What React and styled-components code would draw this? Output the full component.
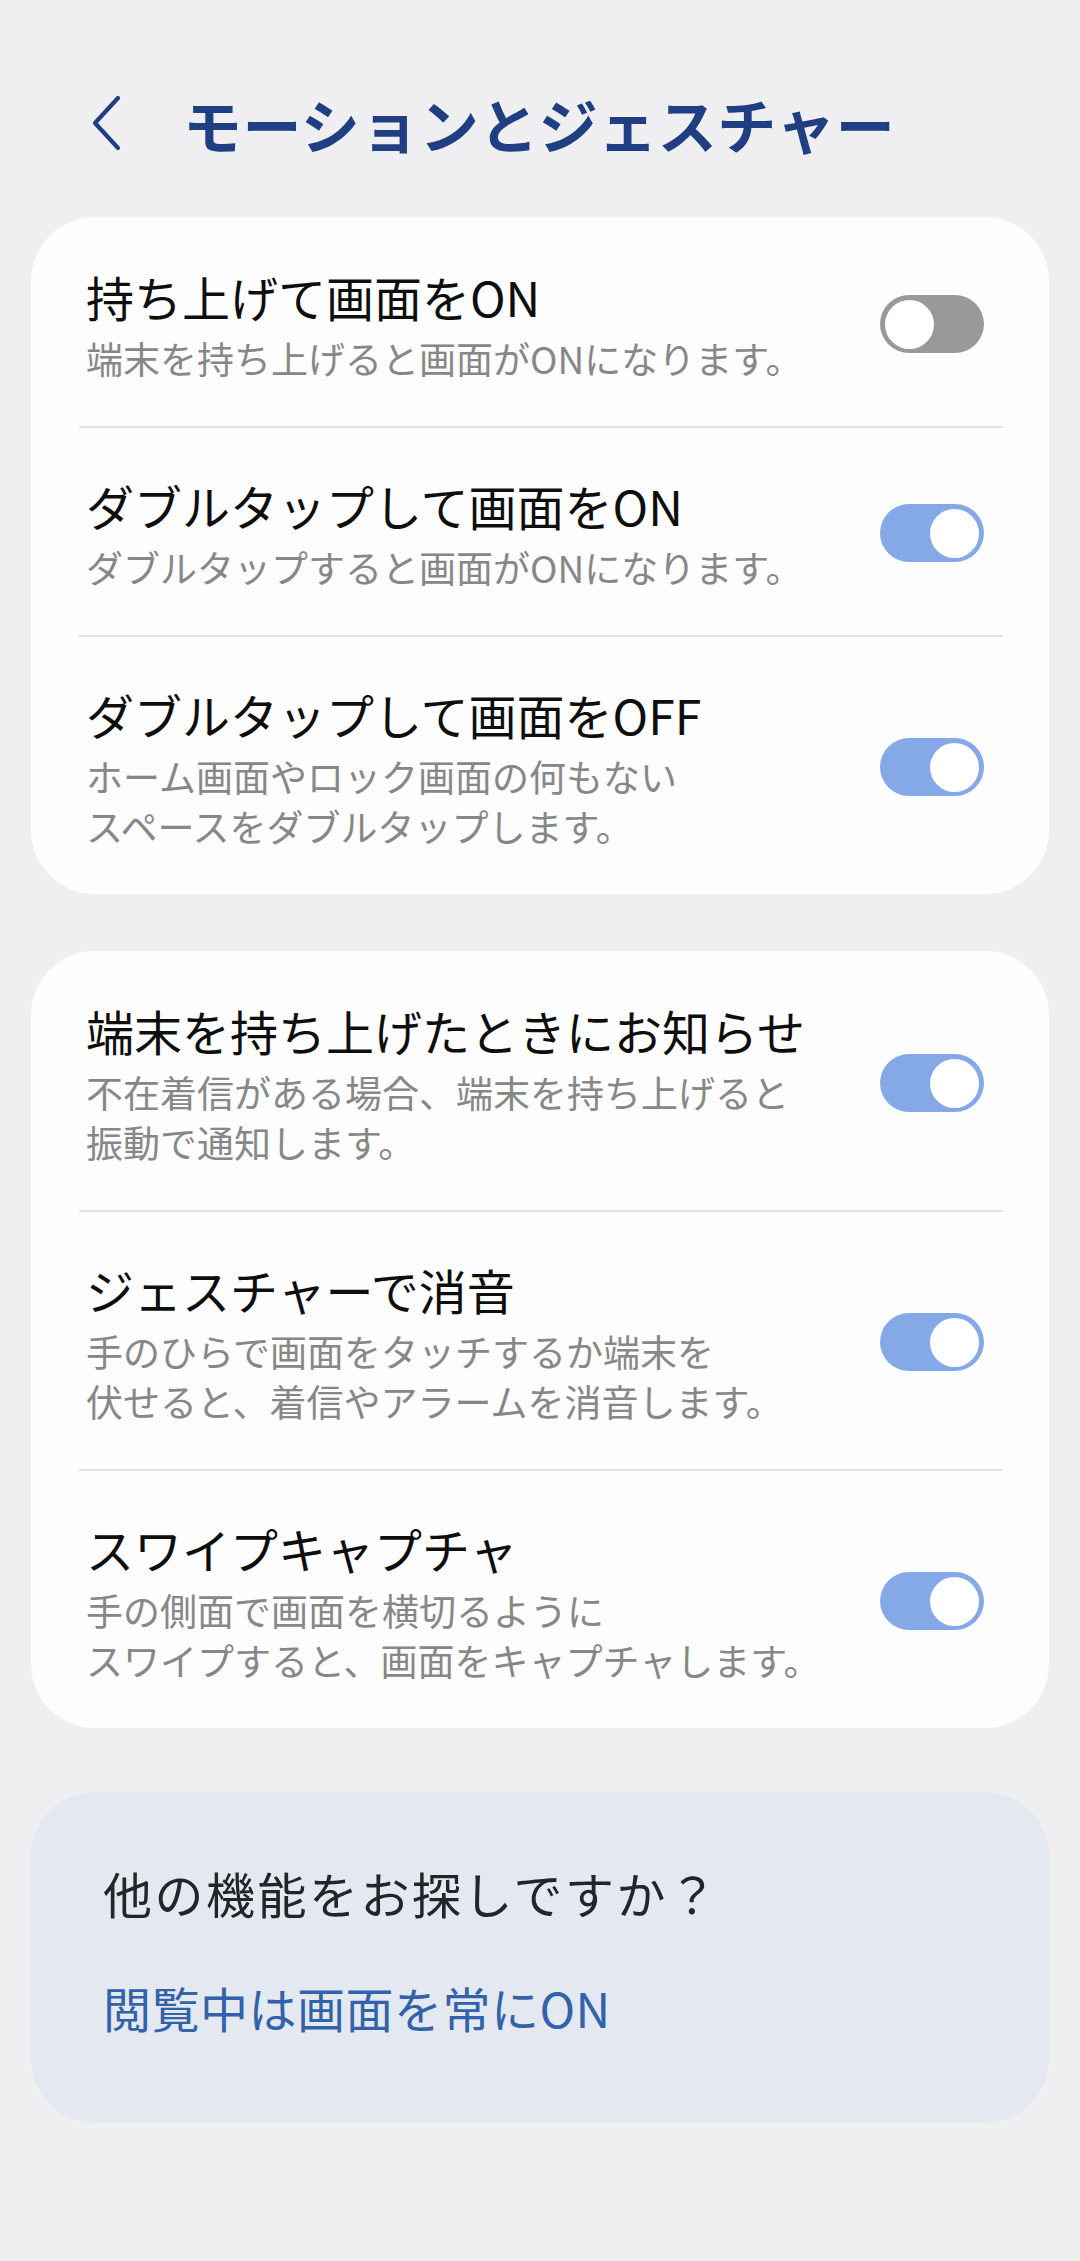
import React from "react";
import styled, { createGlobalStyle } from "styled-components";

const GlobalStyle = createGlobalStyle`
  html, body {
    margin: 0;
    padding: 0;
    background: #efeff1;
  }
  body {
    font-family: "Noto Sans CJK JP", "Noto Sans", sans-serif;
    -webkit-font-smoothing: antialiased;
  }
  * { box-sizing: border-box; }
`;

const Page = styled.div`
  width: 1080px;
  min-height: 2261px;
  padding: 78px 31px 120px 31px;
  background: #efeff1;
  display: flex;
  flex-direction: column;
`;

const Header = styled.header`
  display: flex;
  align-items: center;
  height: 90px;
  padding-left: 59px;
  gap: 61px;
  margin-bottom: 49px;
`;

const BackButton = styled.button`
  border: none;
  background: none;
  padding: 0;
  width: 32px;
  height: 56px;
  display: flex;
  align-items: center;
  justify-content: center;
  cursor: pointer;
`;

const Title = styled.h1`
  margin: 0;
  font-size: 59px;
  line-height: 1;
  font-weight: 700;
  color: #1f3f82;
  letter-spacing: 0.5px;
`;

const Card = styled.section`
  background: #fdfdfd;
  border-radius: 64px;
  padding: 2px 0;
  margin-bottom: ${(p) => p.$gap || 0}px;
`;

const Row = styled.div`
  display: flex;
  align-items: center;
  padding: 46px 65px 43px 55px;
  gap: 24px;

  &:last-child {
    padding-bottom: 41px;
  }
`;

const TextBlock = styled.div`
  flex: 1;
  min-width: 0;
`;

const RowTitle = styled.div`
  font-size: 48px;
  line-height: 62px;
  color: #0e0e0e;
  white-space: nowrap;
`;

const RowSub = styled.div`
  margin-top: 6px;
  font-size: 37px;
  line-height: 50px;
  color: #878787;
  white-space: nowrap;
`;

const Divider = styled.div`
  height: 2px;
  margin: 0 46px 0 48px;
  background: #e3e3e3;
`;

const Track = styled.div`
  flex: 0 0 auto;
  width: 104px;
  height: 58px;
  border-radius: 29px;
  padding: 0 5px;
  display: flex;
  align-items: center;
  justify-content: ${(p) => (p.$on ? "flex-end" : "flex-start")};
  background: ${(p) => (p.$on ? "#84a9e6" : "#999999")};
`;

const Thumb = styled.div`
  width: 49px;
  height: 49px;
  border-radius: 50%;
  background: #ffffff;
`;

const SuggestCard = styled.section`
  background: #e4e9f1;
  border-radius: 64px;
  padding: 69px 72px 84px 72px;
`;

const SuggestHeading = styled.div`
  font-size: 49px;
  line-height: 64px;
  letter-spacing: 2.5px;
  color: #232529;
`;

const SuggestLink = styled.a`
  display: block;
  margin-top: 50px;
  font-size: 48px;
  line-height: 64px;
  letter-spacing: 0.5px;
  color: #3262a8;
  text-decoration: none;
`;

const Toggle = ({ on }) => (
  <Track $on={on}>
    <Thumb />
  </Track>
);

const groups = [
  [
    {
      title: "持ち上げて画面をON",
      sub: ["端末を持ち上げると画面がONになります。"],
      on: false,
    },
    {
      title: "ダブルタップして画面をON",
      sub: ["ダブルタップすると画面がONになります。"],
      on: true,
    },
    {
      title: "ダブルタップして画面をOFF",
      sub: ["ホーム画面やロック画面の何もない", "スペースをダブルタップします。"],
      on: true,
    },
  ],
  [
    {
      title: "端末を持ち上げたときにお知らせ",
      sub: ["不在着信がある場合、端末を持ち上げると", "振動で通知します。"],
      on: true,
    },
    {
      title: "ジェスチャーで消音",
      sub: ["手のひらで画面をタッチするか端末を", "伏せると、着信やアラームを消音します。"],
      on: true,
    },
    {
      title: "スワイプキャプチャ",
      sub: ["手の側面で画面を横切るように", "スワイプすると、画面をキャプチャします。"],
      on: true,
    },
  ],
];

export default function App() {
  return (
    <>
      <GlobalStyle />
      <Page>
        <Header>
          <BackButton aria-label="戻る">
            <svg width="32" height="56" viewBox="0 0 32 56" fill="none">
              <path
                d="M28 3 L5 28 L28 53"
                stroke="#1f3f82"
                strokeWidth="4.2"
                strokeLinecap="round"
                strokeLinejoin="round"
              />
            </svg>
          </BackButton>
          <Title>モーションとジェスチャー</Title>
        </Header>

        {groups.map((items, gi) => (
          <Card key={gi} $gap={gi === 0 ? 57 : 64}>
            {items.map((it, i) => (
              <React.Fragment key={it.title}>
                {i > 0 && <Divider />}
                <Row>
                  <TextBlock>
                    <RowTitle>{it.title}</RowTitle>
                    <RowSub>
                      {it.sub.map((line, li) => (
                        <div key={li}>{line}</div>
                      ))}
                    </RowSub>
                  </TextBlock>
                  <Toggle on={it.on} />
                </Row>
              </React.Fragment>
            ))}
          </Card>
        ))}

        <SuggestCard>
          <SuggestHeading>他の機能をお探しですか？</SuggestHeading>
          <SuggestLink href="#">閲覧中は画面を常にON</SuggestLink>
        </SuggestCard>
      </Page>
    </>
  );
}
